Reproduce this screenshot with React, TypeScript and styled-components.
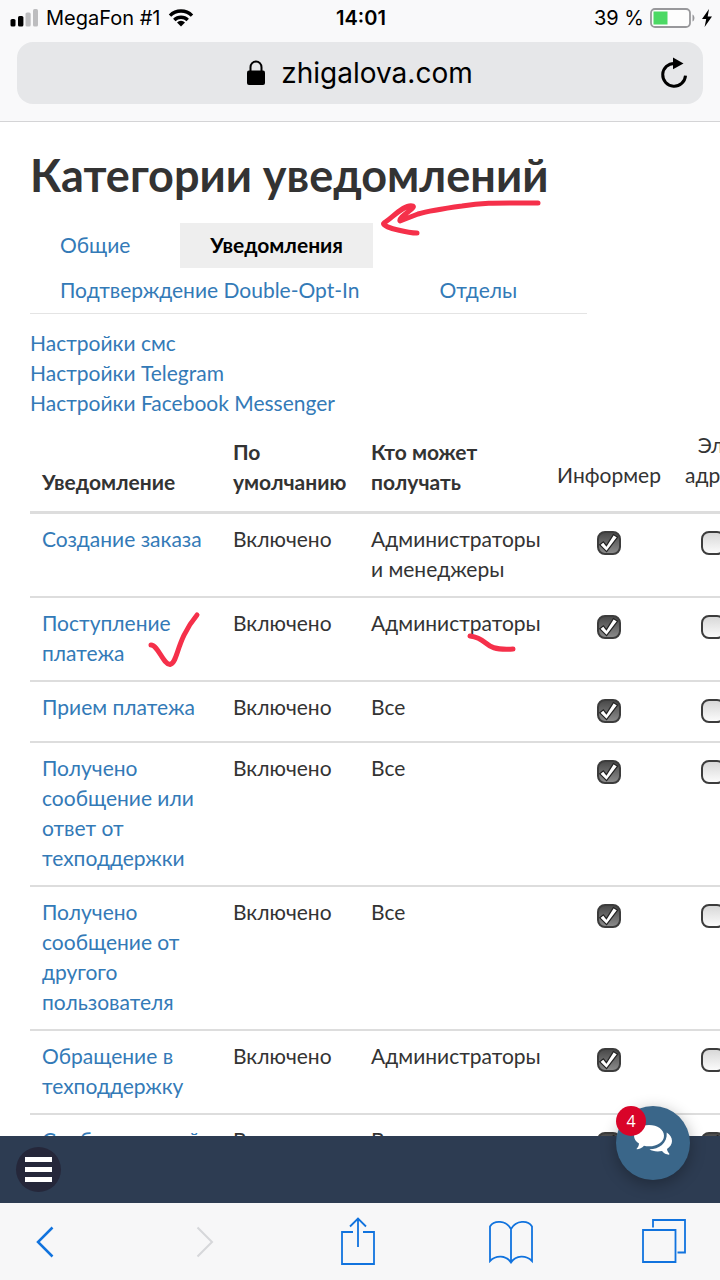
import React from "react";
import styled, { createGlobalStyle, css } from "styled-components";

const GlobalStyle = createGlobalStyle`
  * { box-sizing: border-box; }
  body { margin: 0; background: #fff; }
  button, input { font: inherit; }
`;

const systemFont = `Inter, "Liberation Sans", sans-serif`;
const pageFont = `Lato, "Open Sans", sans-serif`;

const Screen = styled.div`
  height: 100vh;
  display: flex;
  flex-direction: column;
  overflow: hidden;
  font-family: ${pageFont};
  font-size: 21px;
  line-height: 30px;
  color: #333;
`;

const BrowserTop = styled.header`
  flex: none;
  background: #f9f9fa;
  border-bottom: 1px solid #d4d4d6;
  font-family: ${systemFont};
  color: #000;
`;

const StatusBar = styled.div`
  display: grid;
  grid-template-columns: 1fr auto 1fr;
  align-items: center;
  height: 36px;
  padding: 0 8px 0 10px;
  font-size: 20px;
  line-height: 24px;
`;

const StatusGroup = styled.div<{ $end?: boolean }>`
  display: flex;
  align-items: center;
  gap: ${(p) => (p.$end ? 6 : 8)}px;
  justify-content: ${(p) => (p.$end ? "flex-end" : "flex-start")};
`;

const Clock = styled.time`
  font-weight: 600;
`;

const AddressBar = styled.div`
  display: grid;
  grid-template-columns: 1fr auto 1fr;
  align-items: center;
  height: 62px;
  margin: 6px 17px 17px;
  padding: 0 14px;
  border-radius: 16px;
  background: #e6e7e9;
`;

const Address = styled.div`
  grid-column: 2;
  display: flex;
  align-items: center;
  gap: 16px;
  font-size: 28px;
  line-height: 36px;
`;

const IconButton = styled.button`
  display: flex;
  align-items: center;
  justify-content: center;
  padding: 0;
  border: 0;
  background: none;
  color: inherit;
  justify-self: end;
`;

const Content = styled.main`
  position: relative;
  flex: 1;
  min-height: 0;
  overflow: hidden;
  padding: 29px 0 0 30px;
  background: #fff;
`;

const Title = styled.h1`
  margin: 0;
  font-size: 45px;
  line-height: 48px;
  font-weight: 700;
`;

const Tabs = styled.nav`
  display: flex;
  flex-wrap: wrap;
  column-gap: 20px;
  max-width: 557px;
  margin-top: 24px;
  border-bottom: 1px solid #e4e4e4;
`;

const Tab = styled.a<{ $active?: boolean }>`
  height: 45px;
  padding: 0 30px;
  line-height: 44px;
  text-decoration: none;
  color: #337ab7;
  ${(p) =>
    p.$active &&
    css`
      background: #eee;
      color: #000;
      font-weight: 700;
    `}
`;

const TextLink = styled.a`
  color: #337ab7;
  text-decoration: none;
`;

const Settings = styled.div`
  display: flex;
  flex-direction: column;
  align-items: flex-start;
  margin: 14px 0 12px;
`;

const Table = styled.table`
  width: 100%;
  table-layout: fixed;
  border-collapse: separate;
  border-spacing: 0;
`;

const Col = styled.col<{ $w: number }>`
  width: ${(p) => p.$w}px;
`;

const HeadCell = styled.th<{ $option?: boolean }>`
  padding: 0 12px 14px;
  vertical-align: bottom;
  text-align: left;
  font-weight: 700;
  border-bottom: 3px solid #ddd;
  ${(p) =>
    p.$option &&
    css`
      padding-bottom: 21px;
      text-align: center;
      font-weight: 400;
    `}
`;

const Cell = styled.td<{ $option?: boolean }>`
  padding: 10px 12px 12px;
  vertical-align: top;
  border-bottom: 2px solid #ddd;
  text-align: ${(p) => (p.$option ? "center" : "left")};
`;

const Check = styled.input`
  appearance: none;
  display: block;
  width: 24px;
  height: 24px;
  margin: 7px 0 6px;
  border: 2px solid #3c3c3c;
  border-radius: 8px;
  background: linear-gradient(#d8d8d8, #fbfbfb);
  &:checked {
    background: linear-gradient(#4a4a4a, #8a8a8a);
  }
`;

const CheckWrap = styled.span`
  position: relative;
  display: block;
  width: 24px;
  margin: 0 auto;
`;

const Tick = styled.svg`
  position: absolute;
  left: 0;
  top: 0;
  pointer-events: none;
`;

const Ink = styled.svg`
  position: absolute;
  left: 0;
  top: 0;
  pointer-events: none;
  fill: none;
  stroke: #f5304a;
  stroke-width: 5;
  stroke-linecap: round;
  stroke-linejoin: round;
`;

const SiteBar = styled.div`
  position: relative;
  flex: none;
  display: flex;
  align-items: center;
  height: 67px;
  padding: 0 16px;
  background: #2d3c52;
`;

const MenuButton = styled.button`
  display: flex;
  align-items: center;
  justify-content: center;
  width: 45px;
  height: 45px;
  padding: 0;
  border: 0;
  border-radius: 50%;
  background: #25273a;
`;

const ChatButton = styled.button`
  position: absolute;
  right: 30px;
  bottom: 23px;
  display: flex;
  align-items: center;
  justify-content: center;
  width: 74px;
  height: 74px;
  padding: 0 0 6px;
  border: 0;
  border-radius: 50%;
  background: #3a6689;
  color: #fff;
  box-shadow: 0 4px 16px rgba(0, 0, 0, 0.3);
`;

const Badge = styled.span`
  position: absolute;
  left: 0;
  top: 0;
  width: 30px;
  height: 30px;
  border-radius: 50%;
  background: #d90429;
  font-family: "Open Sans", sans-serif;
  font-size: 16px;
  line-height: 30px;
  text-align: center;
`;

const Toolbar = styled.nav`
  flex: none;
  display: flex;
  align-items: center;
  justify-content: space-between;
  height: 77px;
  padding: 0 34px 0 30px;
  background: #f7f7f8;
  color: #1173de;
`;

const ToolButton = styled(IconButton)<{ $start?: boolean }>`
  width: 44px;
  padding-right: ${(p) => (p.$start ? 14 : 0)}px;
`;

const rows = [
  { name: "Создание заказа", who: "Администраторы и менеджеры" },
  { name: "Поступление платежа", who: "Администраторы" },
  { name: "Прием платежа", who: "Все" },
  { name: "Получено сообщение или ответ от техподдержки", who: "Все" },
  { name: "Получено сообщение от другого пользователя", who: "Все" },
  { name: "Обращение в техподдержку", who: "Администраторы" },
  { name: "Сообщение мой", who: "Все", mail: true },
];

function Option({ label, on }: { label: string; on: boolean }) {
  return (
    <CheckWrap>
      <Check type="checkbox" defaultChecked={on} aria-label={label} />
      {on && (
        <Tick width="24" height="24" viewBox="0 0 24 24">
          <path
            d="M2.800 13.800 6.400 10.800l3 3.800L16.400 3.600l4.200 2.600L9.600 20.600z"
            fill="#fff"
            stroke="#222"
            strokeWidth="1.200"
          />
        </Tick>
      )}
    </CheckWrap>
  );
}

export default function App() {
  return (
    <Screen>
      <GlobalStyle />
      <BrowserTop>
        <StatusBar>
          <StatusGroup>
            <svg width="28" height="18" viewBox="0 0 28 18">
              <rect x="0.5" y="10" width="5" height="7.5" rx="1.6" />
              <rect x="8" y="7" width="5.4" height="10.500" rx="1.6" />
              <rect x="15.500" y="3.500" width="5.200" height="14" rx="1.6" fill="#bdbdbf" />
              <rect x="23" y="0" width="5" height="17.500" rx="1.6" fill="#bdbdbf" />
            </svg>
            <span>MegaFon #1</span>
            <svg width="26" height="18" viewBox="0 0 26 18">
              <g fill="none" stroke="#000" strokeWidth="3.4">
                <path d="M2 6.600a15.500 15.500 0 0 1 22 0" />
                <path d="M6.300 11a9.500 9.500 0 0 1 13.400 0" />
              </g>
              <path d="M13 17.500 9 13.500a5.600 5.600 0 0 1 8 0z" />
            </svg>
          </StatusGroup>
          <Clock>14:01</Clock>
          <StatusGroup $end>
            <span>39 %</span>
            <svg width="46" height="20" viewBox="0 0 46 20">
              <rect x="1" y="1" width="39" height="18" rx="4" fill="#fdfdfd" stroke="#98989b" strokeWidth="1.800" />
              <rect x="3.500" y="3.500" width="14" height="13" fill="#4cd964" />
              <path d="M42.500 6.500c2.600 1 2.600 6 0 7z" fill="#98989b" />
            </svg>
            <svg width="10" height="18" viewBox="0 0 10 18">
              <path d="M7 0 0 10h4.200L2.600 18 10 7.400H5.700z" />
            </svg>
          </StatusGroup>
        </StatusBar>
        <AddressBar>
          <Address>
            <svg width="18" height="26" viewBox="0 0 18 26">
              <rect x="0" y="10.500" width="18" height="14.500" rx="2" />
              <path d="M3.500 11V7.200a5.500 5.800 0 0 1 11 0V11" fill="none" stroke="#000" strokeWidth="2" />
            </svg>
            <span>zhigalova.com</span>
          </Address>
          <IconButton aria-label="Обновить">
            <svg width="30" height="32" viewBox="0 0 30 32">
              <path d="M15.500 6.400A11.400 11.400 0 1 0 26.500 18.600" fill="none" stroke="#000" strokeWidth="3" />
              <path d="M14 0.500 24.500 6.400 14 12.300z" />
            </svg>
          </IconButton>
        </AddressBar>
      </BrowserTop>

      <Content>
        <Title>Категории уведомлений</Title>
        <Tabs>
          <Tab href="#general">Общие</Tab>
          <Tab href="#notifications" $active>
            Уведомления
          </Tab>
          <Tab href="#optin">Подтверждение Double-Opt-In</Tab>
          <Tab href="#departments">Отделы</Tab>
        </Tabs>
        <Settings>
          <TextLink href="#sms">Настройки смс</TextLink>
          <TextLink href="#telegram">Настройки Telegram</TextLink>
          <TextLink href="#facebook">Настройки Facebook Messenger</TextLink>
        </Settings>
        <Table>
          <colgroup>
            <Col $w={191} />
            <Col $w={138} />
            <Col $w={186} />
            <Col $w={128} />
            <Col $w={80} />
          </colgroup>
          <thead>
            <tr>
              <HeadCell>Уведомление</HeadCell>
              <HeadCell>По умолчанию</HeadCell>
              <HeadCell>
                Кто может
                <br />
                получать
              </HeadCell>
              <HeadCell $option>Информер</HeadCell>
              <HeadCell $option>Эл. адрес</HeadCell>
            </tr>
          </thead>
          <tbody>
            {rows.map((r) => (
              <tr key={r.name}>
                <Cell>
                  <TextLink href="#edit">{r.name}</TextLink>
                </Cell>
                <Cell>Включено</Cell>
                <Cell>{r.who}</Cell>
                <Cell $option>
                  <Option label={`${r.name}: информер`} on />
                </Cell>
                <Cell $option>
                  <Option label={`${r.name}: эл. адрес`} on={!!r.mail} />
                </Cell>
              </tr>
            ))}
          </tbody>
        </Table>
        <Ink width="720" height="640" viewBox="0 122 720 640" aria-hidden="true">
          <path d="M538 203C500 203 486 202 462 206C440 209 428 211 418 214L400 221C398 217 416 208 413 206C405 203 391 219 384 223C381 225 392 229 398 230C406 232 412 233 417 233" />
          <path d="M151 645C158 645 163 664 170 664.500C178 663 176 640 197 615" />
          <path d="M470 636C491 639 481 651 513 649" />
        </Ink>
      </Content>

      <SiteBar>
        <MenuButton aria-label="Меню">
          <svg width="27" height="25" viewBox="0 0 27 25" fill="#fff">
            <rect width="27" height="5" />
            <rect y="10" width="27" height="5" />
            <rect y="20" width="27" height="5" />
          </svg>
        </MenuButton>
        <ChatButton aria-label="Чат">
          <svg width="38" height="30" viewBox="0 0 38 30" fill="currentColor">
            <path d="M15 0C23.500 0 30 4.700 30 10.700S23.500 21.300 15 21.300C13 21.300 11.500 21 10 20.700C8 23 5.500 24 3 24.300C2.500 24.300 2.600 23.600 3 23.200C4.200 22 4.800 20.500 5 18.500C2 16.500 0 14 0 10.700C0 4.700 6.500 0 15 0z" />
            <path d="M32.700 7.500C36 9.500 38 12.500 38 16C38 19.300 36 22 33 24C33.300 26 34 27.300 35.200 28.600C35.600 29.100 35.500 29.700 34.800 29.700C32.300 29.500 29.800 28.300 28 26C22.500 27 18 26 15.500 24.200C25 24.200 33.500 18.500 32.700 7.500z" />
          </svg>
          <Badge>4</Badge>
        </ChatButton>
      </SiteBar>

      <Toolbar>
        <ToolButton $start aria-label="Назад">
          <svg width="22" height="32" viewBox="0 0 22 32" fill="none" stroke="currentColor" strokeWidth="2.500">
            <path d="M18.500 1.500 4 16l14.500 14.500" />
          </svg>
        </ToolButton>
        <ToolButton aria-label="Вперёд" disabled>
          <svg width="22" height="32" viewBox="0 0 22 32" fill="none" stroke="#d6d7da" strokeWidth="2">
            <path d="M3.500 1.500 18 16 3.500 30.500" />
          </svg>
        </ToolButton>
        <ToolButton aria-label="Поделиться">
          <svg width="34" height="50" viewBox="0 0 34 50" fill="none" stroke="currentColor" strokeWidth="1.800">
            <path d="M12 15H1v32h32V15H22M17 30V1.500M9 9.500l8-8 8 8" />
          </svg>
        </ToolButton>
        <ToolButton aria-label="Закладки">
          <svg width="44" height="44" viewBox="0 0 44 44" fill="none" stroke="currentColor" strokeWidth="1.800">
            <path d="M22 9C17 0 5 0 1 6.500V41c6-6 16-6 21 1.500C27 35 37 35 43 41V6.500C39 0 27 0 22 9zV42" />
          </svg>
        </ToolButton>
        <ToolButton aria-label="Вкладки">
          <svg width="44" height="46" viewBox="0 0 44 46" fill="none" stroke="currentColor" strokeWidth="1.800">
            <path d="M1 11h32.500v32H1zM11 8.500V1h32v32.500h-7.500" />
          </svg>
        </ToolButton>
      </Toolbar>
    </Screen>
  );
}
